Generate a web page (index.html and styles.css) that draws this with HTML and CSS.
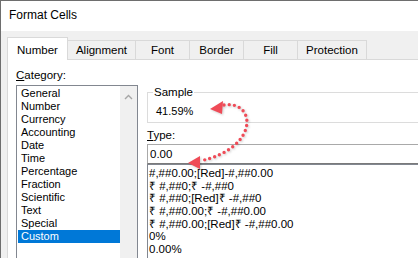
FILE: index.html
```html
<!DOCTYPE html>
<html>
    <head>
        <meta charset="utf-8">
        <link rel="stylesheet" href="styles.css">
    </head>
    <body>
        <div class="window">
            <div class="titlebar">Format Cells</div>

            <div class="dialog">
                <div class="tabs">
                    <div class="tab active">Number</div>
                    <div class="tab">Alignment</div>
                    <div class="tab">Font</div>
                    <div class="tab">Border</div>
                    <div class="tab">Fill</div>
                    <div class="tab">Protection</div>
                </div>

                <div class="panel">
                    <div class="col-left">
                        <div class="label"><u>C</u>ategory:</div>
                        <div class="listbox">
                            <ul class="category-list">
                                <li>General</li>
                                <li>Number</li>
                                <li>Currency</li>
                                <li>Accounting</li>
                                <li>Date</li>
                                <li>Time</li>
                                <li>Percentage</li>
                                <li>Fraction</li>
                                <li>Scientific</li>
                                <li>Text</li>
                                <li>Special</li>
                                <li class="selected">Custom</li>
                            </ul>
                            <div class="scrollbar">
                                <svg class="chevron" width="9" height="6" viewBox="0 0 9 6">
                                    <path d="M1 5 L4.5 1.5 L8 5" fill="none" stroke="#a6a6a6" stroke-width="1.4"/>
                                </svg>
                            </div>
                        </div>
                    </div>

                    <div class="col-right">
                        <fieldset class="sample">
                            <legend>Sample</legend>
                            <div class="sample-value">41.59%</div>
                        </fieldset>

                        <div class="label type-label"><u>T</u>ype:</div>
                        <div class="type-input">0.00</div>
                        <ul class="type-list">
                            <li>#,##0.00;[Red]-#,##0.00</li>
                            <li>₹ #,##0;₹ -#,##0</li>
                            <li>₹ #,##0;[Red]₹ -#,##0</li>
                            <li>₹ #,##0.00;₹ -#,##0.00</li>
                            <li>₹ #,##0.00;[Red]₹ -#,##0.00</li>
                            <li>0%</li>
                            <li>0.00%</li>
                        </ul>
                    </div>
                </div>
            </div>

            <!-- red dotted callout from sample to type box -->
            <svg class="callout" width="418" height="258" viewBox="0 0 418 258">
                <path d="M224 105 C 256 100, 260 148, 200 161" fill="none" stroke="#ef4b57"
                      stroke-width="3.4" stroke-linecap="round" stroke-dasharray="0 5.2"/>
                <polygon points="210,109 223,101 222,114" fill="#ef4b57"/>
                <polygon points="188,163 200,156 200,169" fill="#ef4b57"/>
            </svg>
        </div>
    </body>
</html>
```

FILE: styles.css
```css
body {
    margin: 0;
    width: 418px;
    height: 258px;
    overflow: hidden;
    background: white;
    font-family: "Liberation Sans", Arial, sans-serif;
    font-size: 11.5px;
    color: black;
}

.window {
    position: relative;
    height: 258px;
    box-sizing: border-box;
    border-top: 1px solid #6e6e6e;
    border-left: 1px solid #6e6e6e;
    display: flex;
    flex-direction: column;
    overflow: hidden;
}

.titlebar {
    height: 30px;
    line-height: 29px;
    padding-left: 8px;
    font-size: 12px;
    background: white;
}

.dialog {
    flex: 1;
    min-height: 0;
    background: #f0f0f0;
    padding: 6px 0 0 6px;
    display: flex;
    flex-direction: column;
}

/* tab strip */
.tabs {
    display: flex;
    align-items: flex-end;
    height: 22px;
    flex-shrink: 0;
}
.tab {
    box-sizing: border-box;
    min-width: 55px;
    height: 19px;
    line-height: 18px;
    padding: 0 8px;
    margin-right: -1px;
    text-align: center;
    border: 1px solid #d9d9d9;
    border-bottom: none;
    background: #f0f0f0;
}
.tab.active {
    position: relative;
    z-index: 1;
    height: 23px;
    padding: 3px 9px 1px 9px;
    margin-bottom: -1px;
    background: white;
}

/* panel body, clipped: boxes on the right run off the window */
.panel {
    flex: 1;
    min-height: 0;
    display: flex;
    gap: 9px;
    overflow: hidden;
    background: white;
    border-top: 1px solid #d9d9d9;
    border-left: 1px solid #d9d9d9;
    padding-left: 8px;
}

.label {
    line-height: 13px;
}
.col-left {
    width: 122px;
    flex-shrink: 0;
    padding-top: 9px;
}
.col-left .label {
    margin-bottom: 3px;
}

.listbox {
    display: flex;
    height: 200px;
    border: 1px solid #828790;
}
.category-list {
    list-style: none;
    margin: 0;
    padding: 1px 0 0 0;
    width: 103px;
}
.category-list li {
    margin-left: 1px;
    padding-left: 3px;
    height: 13px;
    line-height: 13px;
    font-size: 11px;
}
.category-list li.selected {
    background: #0078d7;
    color: white;
}
.scrollbar {
    width: 17px;
    background: #f0f0f0;
    display: flex;
    justify-content: center;
}
.chevron {
    margin-top: 8px;
}

/* right column */
.col-right {
    flex: 1;
    min-width: 0;
    margin-right: -12px;
}
.sample {
    margin: 26px 0 0 0;
    padding: 0 0 4px 5px;
    border: 1px solid #dcdcdc;
}
.sample legend {
    padding: 0 1px;
    line-height: 12px;
}
.sample-value {
    margin: 7px 0 0 3px;
    line-height: 13px;
    font-size: 11px;
}
.type-label {
    margin-top: 6px;
}
.type-input {
    margin-top: 2px;
    height: 18px;
    line-height: 18px;
    padding-left: 2px;
    border: 1px solid #a9a9a9;
    border-bottom-color: #7a7a7a;
}
.type-list {
    list-style: none;
    margin: 0;
    padding: 2px 0 0 1px;
    height: 120px;
    border: 1px solid #828790;
}
.type-list li {
    height: 12.7px;
    line-height: 12.7px;
}

.callout {
    position: absolute;
    left: -1px;
    top: -1px;
    pointer-events: none;
    filter: drop-shadow(1px 1px 1px rgba(0, 0, 0, 0.2));
}
```
